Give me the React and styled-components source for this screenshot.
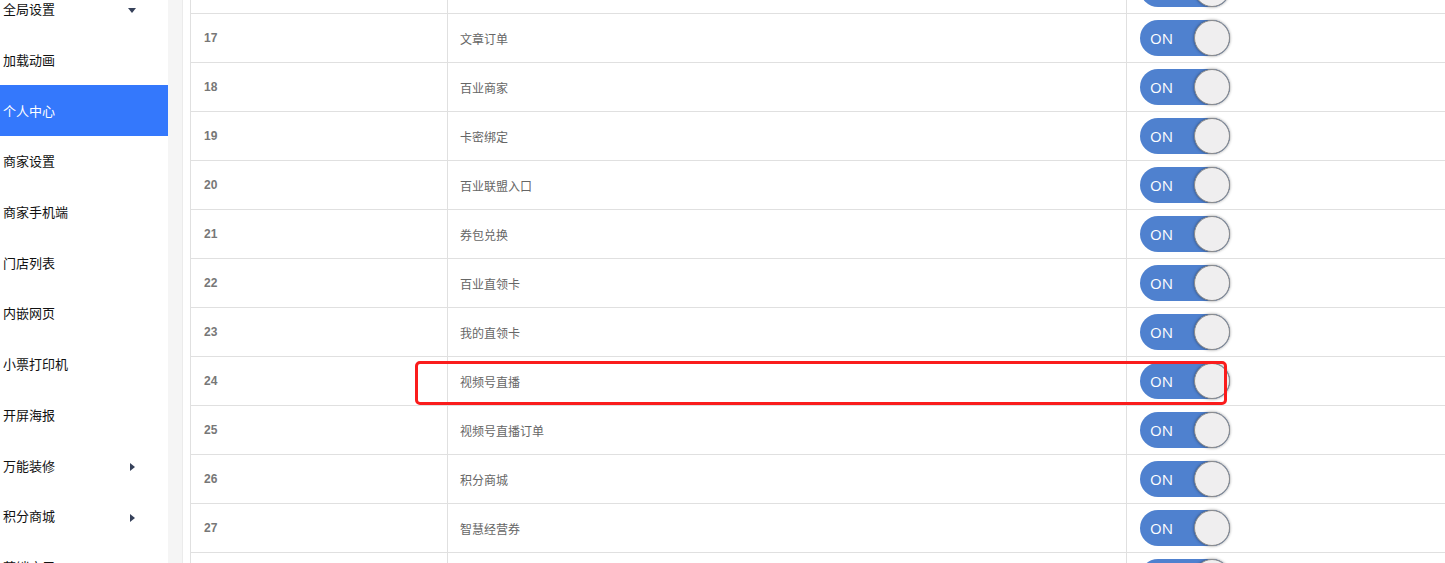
import React from "react";
import styled, { createGlobalStyle } from "styled-components";

const Global = createGlobalStyle`
  html, body { margin: 0; padding: 0; background: #fff; }
  body { overflow: hidden; font-family: "Noto Sans CJK SC", "Liberation Sans", sans-serif; }
`;

const Page = styled.div`
  position: relative;
  display: flex;
  width: 1445px;
  height: 563px;
  overflow: hidden;
  background: #fff;
`;

const Sidebar = styled.nav`
  width: 168px;
  flex: none;
  display: flex;
  flex-direction: column;
  margin-top: -16.5px;
  background: #fff;
`;

const NavItem = styled.div`
  height: 50.7px;
  flex: none;
  display: flex;
  align-items: center;
  justify-content: space-between;
  padding: 0 32px 0 3px;
  font-size: 13px;
  color: ${(p) => (p.$active ? "#fff" : "#111")};
  background: ${(p) => (p.$active ? "#3478fc" : "transparent")};
`;

const Caret = styled.span`
  width: 0;
  height: 0;
  ${(p) =>
    p.$down
      ? `border-left: 4px solid transparent; border-right: 4px solid transparent; border-top: 5px solid #36415a; margin-top: 3px;`
      : `border-top: 4px solid transparent; border-bottom: 4px solid transparent; border-left: 5px solid #36415a; margin-top: 4px; margin-right: 1px;`}
`;

const Gutter = styled.div`
  width: 14px;
  flex: none;
  background: #f5f5f5;
  border-right: 1px solid #ebebeb;
`;

const Main = styled.main`
  flex: 1;
  padding-left: 7px;
  overflow: hidden;
`;

const Table = styled.div`
  display: flex;
  flex-direction: column;
  margin-top: -35px;
  width: 1300px;
  border-left: 1px solid #e0e0e0;
`;

const Row = styled.div`
  display: grid;
  grid-template-columns: 257px 679px 1fr;
  height: 48px;
  border-bottom: 1px solid #e0e0e0;
`;

const Cell = styled.div`
  display: flex;
  align-items: center;
  padding-left: ${(p) => p.$pad || 13}px;
  border-right: ${(p) => (p.$last ? "none" : "1px solid #e0e0e0")};
  font-size: 12px;
  color: #666;
`;

const Num = styled(Cell)`
  font-family: "Liberation Sans", "Noto Sans CJK SC", sans-serif;
  font-weight: bold;
  color: #777;
`;

const Toggle = styled.div`
  position: relative;
  width: 90px;
  height: 36px;
  border-radius: 18px;
  background: #4f81cf;
  display: flex;
  align-items: center;
  justify-content: space-between;
  box-sizing: border-box;
  padding-left: 10px;
`;

const OnLabel = styled.span`
  font-family: "Open Sans", "Liberation Sans", sans-serif;
  font-size: 15px;
  color: #fff;
`;

const Knob = styled.span`
  width: 34px;
  height: 34px;
  border-radius: 50%;
  background: #efeeef;
  border: 1px solid #8c8c8c;
  box-shadow: 0 0 3px rgba(0, 0, 0, 0.45);
`;

const Highlight = styled.div`
  position: absolute;
  left: 415px;
  top: 361px;
  width: 812px;
  height: 44px;
  box-sizing: border-box;
  border: 3px solid #fa1c1c;
  border-radius: 5px;
  pointer-events: none;
`;

const navItems = [
  { label: "全局设置", caret: "down" },
  { label: "加载动画" },
  { label: "个人中心", active: true },
  { label: "商家设置" },
  { label: "商家手机端" },
  { label: "门店列表" },
  { label: "内嵌网页" },
  { label: "小票打印机" },
  { label: "开屏海报" },
  { label: "万能装修", caret: "right" },
  { label: "积分商城", caret: "right" },
  { label: "营销应用" },
];

const rows = [
  [16, "文章列表"],
  [17, "文章订单"],
  [18, "百业商家"],
  [19, "卡密绑定"],
  [20, "百业联盟入口"],
  [21, "券包兑换"],
  [22, "百业直领卡"],
  [23, "我的直领卡"],
  [24, "视频号直播"],
  [25, "视频号直播订单"],
  [26, "积分商城"],
  [27, "智慧经营券"],
  [28, "积分订单"],
];

export default function App() {
  return (
    <>
      <Global />
      <Page>
        <Sidebar>
          {navItems.map((n) => (
            <NavItem key={n.label} $active={n.active}>
              <span>{n.label}</span>
              {n.caret && <Caret $down={n.caret === "down"} />}
            </NavItem>
          ))}
        </Sidebar>
        <Gutter />
        <Main>
          <Table>
            {rows.map(([id, name]) => (
              <Row key={id}>
                <Num>{id}</Num>
                <Cell $pad={12}>{name}</Cell>
                <Cell $last>
                  <Toggle>
                    <OnLabel>ON</OnLabel>
                    <Knob />
                  </Toggle>
                </Cell>
              </Row>
            ))}
          </Table>
        </Main>
        <Highlight />
      </Page>
    </>
  );
}
